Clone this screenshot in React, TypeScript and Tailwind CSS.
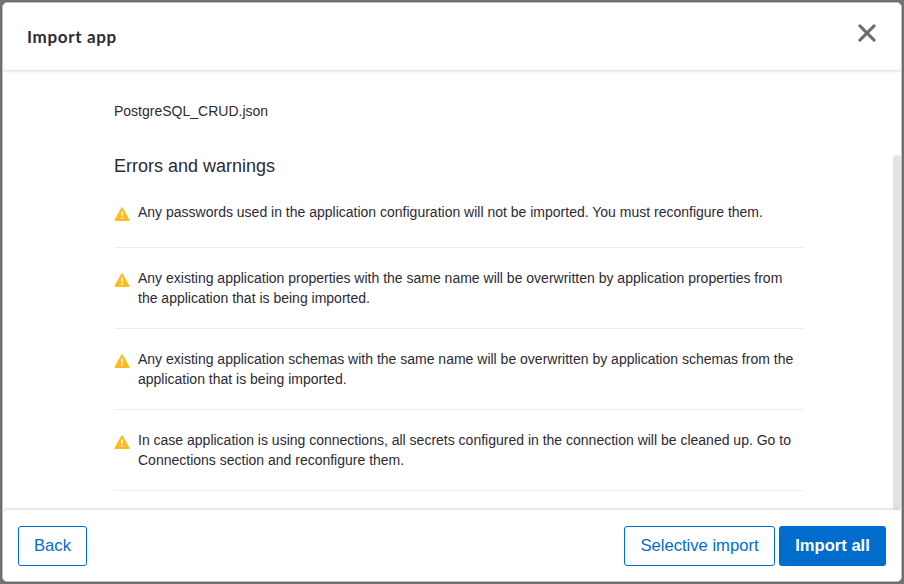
const warnings: { id: string; lines: string[] }[] = [
  { id: 'passwords', lines: ['Any passwords used in the application configuration will not be imported. You must reconfigure them.'] },
  {
    id: 'properties',
    lines: [
      'Any existing application properties with the same name will be overwritten by application properties from',
      'the application that is being imported.',
    ],
  },
  {
    id: 'schemas',
    lines: [
      'Any existing application schemas with the same name will be overwritten by application schemas from the',
      'application that is being imported.',
    ],
  },
  {
    id: 'connections',
    lines: [
      'In case application is using connections, all secrets configured in the connection will be cleaned up. Go to',
      'Connections section and reconfigure them.',
    ],
  },
];

function WarningIcon() {
  return (
    <svg className="mt-[5px] h-[14px] w-4 shrink-0" viewBox="0 0 16 14" aria-hidden="true">
      <path d="M7.1 0.9a1.05 1.05 0 0 1 1.8 0l6.4 11.7a0.9 0.9 0 0 1-.8 1.3H1.5a0.9 0.9 0 0 1-.8-1.3z" fill="#ffbc21" />
      <path d="M7 4.6h2l-.3 4.3H7.3z" fill="#fff" fillOpacity="0.9" />
      <circle cx="8" cy="10.9" r="1" fill="#fff" fillOpacity="0.9" />
    </svg>
  );
}

export default function App() {
  return (
    <div className="h-[584px] w-[904px] bg-[#767676] p-0.5 font-['Liberation_Sans',Arial,sans-serif] text-[#2d2a33]">
      <div className="flex h-[580px] w-[900px] flex-col overflow-hidden rounded-[5px] border border-[#c4c4c4] bg-white shadow-[0_0_2px_rgba(0,0,0,0.4)]">
        <header className="z-10 flex h-[67px] shrink-0 items-center justify-between rounded-b pr-[25px] pl-6 shadow-[0_1px_3px_rgba(0,0,0,0.17)]">
          <h1 className="pt-px font-['Lato',sans-serif] text-[17px] leading-6 font-bold tracking-[0.65px]">Import app</h1>
          <button aria-label="Close" className="-mt-[7px]">
            <svg className="h-[18px] w-[18px]" viewBox="0 0 18 18">
              <path d="M1.9 1.9l14.2 14.2M16.1 1.9L1.9 16.1" stroke="#6d6d6d" strokeWidth="3" strokeLinecap="round" fill="none" />
            </svg>
          </button>
        </header>
        <main className="flex min-h-0 flex-1 justify-between overflow-hidden pl-[111px]">
          <div className="w-[690px] pt-[31px] text-[14px] leading-5">
            <p>PostgreSQL_CRUD.json</p>
            <h2 className="mt-[31px] text-[18px] leading-7">Errors and warnings</h2>
            <ul className="mt-[22px]">
              {warnings.map((w) => (
                <li key={w.id} className="mb-5 flex gap-2 border-b border-[#ededed] pb-5 first:pb-[25px]">
                  <WarningIcon />
                  <p className="whitespace-nowrap">
                    {w.lines.map((line) => (
                      <span key={line} className="block">{line}</span>
                    ))}
                  </p>
                </li>
              ))}
            </ul>
          </div>
          <div className="mt-[85px] w-2 rounded bg-[#e3e3e3]" />
        </main>
        <footer className="z-10 flex h-[71px] shrink-0 items-center gap-1 rounded-t bg-white px-[15px] text-[16.6px] leading-6 shadow-[0_-1px_3px_rgba(0,0,0,0.17)]">
          <button className="mt-px mr-auto h-10 w-[69px] rounded-[3px] border border-[#006dcc] text-[#006dcc]">Back</button>
          <button className="mt-px h-10 w-[151px] rounded-[3px] border border-[#006dcc] text-[#006dcc]">Selective import</button>
          <button className="mt-px h-10 w-[107px] rounded-[3px] bg-[#006dcc] font-bold text-white">Import all</button>
        </footer>
      </div>
    </div>
  );
}
